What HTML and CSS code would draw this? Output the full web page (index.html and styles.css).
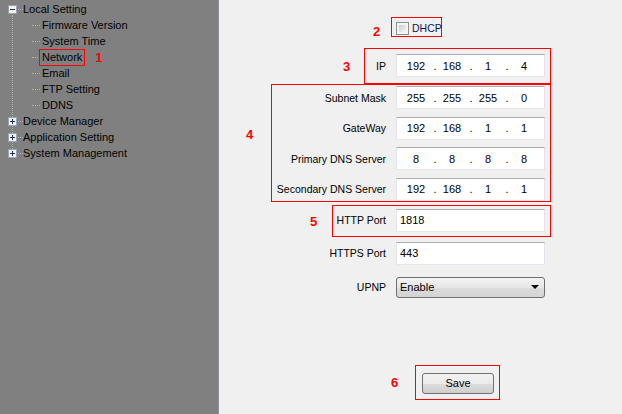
FILE: index.html
```html
<!DOCTYPE html>
<html>
<head>
<meta charset="utf-8">
<link rel="stylesheet" href="styles.css">
</head>
<body>
<div class="page">
  <aside class="sidebar">
    <ul class="tree">
      <li class="node"><span class="exp"><svg width="9" height="9" viewBox="0 0 9 9"><rect x="0.5" y="0.5" width="8" height="8" fill="#f3f3f3" stroke="#9aa3ad"/><path d="M2 4.5h5" stroke="#1c2f6b"/></svg></span><span class="stub"></span><span class="label">Local Setting</span></li>
      <li class="leaf"><span class="hline"></span><span class="label">Firmware Version</span></li>
      <li class="leaf"><span class="hline"></span><span class="label">System Time</span></li>
      <li class="leaf"><span class="hline"></span><span class="label sel">Network</span><span class="tag">1</span></li>
      <li class="leaf"><span class="hline"></span><span class="label">Email</span></li>
      <li class="leaf"><span class="hline"></span><span class="label">FTP Setting</span></li>
      <li class="leaf"><span class="hline"></span><span class="label">DDNS</span></li>
      <li class="node"><span class="exp"><svg width="9" height="9" viewBox="0 0 9 9"><rect x="0.5" y="0.5" width="8" height="8" fill="#f3f3f3" stroke="#9aa3ad"/><path d="M2 4.5h5M4.5 2v5" stroke="#1c2f6b"/></svg></span><span class="stub"></span><span class="label">Device Manager</span></li>
      <li class="node"><span class="exp"><svg width="9" height="9" viewBox="0 0 9 9"><rect x="0.5" y="0.5" width="8" height="8" fill="#f3f3f3" stroke="#9aa3ad"/><path d="M2 4.5h5M4.5 2v5" stroke="#1c2f6b"/></svg></span><span class="stub"></span><span class="label">Application Setting</span></li>
      <li class="node"><span class="exp"><svg width="9" height="9" viewBox="0 0 9 9"><rect x="0.5" y="0.5" width="8" height="8" fill="#f3f3f3" stroke="#9aa3ad"/><path d="M2 4.5h5M4.5 2v5" stroke="#1c2f6b"/></svg></span><span class="stub"></span><span class="label">System Management</span></li>
    </ul>
  </aside>
  <main class="content">
    <div class="form">
      <div class="dhcp-box"><span class="num num-2">2</span><span class="check"></span><span class="dhcp-text">DHCP</span></div>

      <div class="box box-ip">
        <span class="num num-3">3</span>
        <div class="row"><span class="lbl">IP</span><div class="field ip"><span class="oct">192</span><span class="dot">.</span><span class="oct">168</span><span class="dot">.</span><span class="oct">1</span><span class="dot">.</span><span class="oct">4</span></div></div>
      </div>

      <div class="box box-dns">
        <span class="num num-4">4</span>
        <div class="row"><span class="lbl">Subnet Mask</span><div class="field ip"><span class="oct">255</span><span class="dot">.</span><span class="oct">255</span><span class="dot">.</span><span class="oct">255</span><span class="dot">.</span><span class="oct">0</span></div></div>
        <div class="row"><span class="lbl">GateWay</span><div class="field ip"><span class="oct">192</span><span class="dot">.</span><span class="oct">168</span><span class="dot">.</span><span class="oct">1</span><span class="dot">.</span><span class="oct">1</span></div></div>
        <div class="row"><span class="lbl">Primary DNS Server</span><div class="field ip"><span class="oct">8</span><span class="dot">.</span><span class="oct">8</span><span class="dot">.</span><span class="oct">8</span><span class="dot">.</span><span class="oct">8</span></div></div>
        <div class="row"><span class="lbl">Secondary DNS Server</span><div class="field ip"><span class="oct">192</span><span class="dot">.</span><span class="oct">168</span><span class="dot">.</span><span class="oct">1</span><span class="dot">.</span><span class="oct">1</span></div></div>
      </div>

      <div class="box box-http">
        <span class="num num-5">5</span>
        <div class="row"><span class="lbl">HTTP Port</span><div class="field text">1818</div></div>
      </div>

      <div class="row free row-https"><span class="lbl">HTTPS Port</span><div class="field text">443</div></div>

      <div class="row free row-upnp"><span class="lbl">UPNP</span><div class="select"><span>Enable</span><span class="arrow"></span></div></div>

      <div class="save-box"><span class="num num-6">6</span><button class="btn">Save</button></div>
    </div>
  </main>
</div>
</body>
</html>
```
FILE: styles.css
```css
html, body {
  margin: 0;
  padding: 0;
  width: 622px;
  height: 414px;
  overflow: hidden;
  font-family: "Liberation Sans", Arial, sans-serif;
}

.page {
  display: flex;
  width: 622px;
  height: 414px;
}

.sidebar {
  width: 218px;
  flex: none;
  background: #808080;
  border-right: 1px solid #8d949e;
}

.tree {
  list-style: none;
  margin: 0;
  padding: 1px 0 0 0;
  position: relative;
  font-size: 11px;
  color: #000;
}

.tree::before {
  content: "";
  position: absolute;
  left: 12px;
  top: 15px;
  height: 134px;
  border-left: 1px dotted #b0b0b0;
}

.tree li {
  height: 16px;
  display: flex;
  align-items: center;
  white-space: nowrap;
}

.node {
  padding-left: 8px;
}

.exp {
  width: 9px;
  height: 9px;
  display: block;
  position: relative;
  z-index: 1;
}

.exp svg {
  display: block;
}

.stub {
  width: 5px;
  margin-left: 1px;
  border-top: 1px dotted #b0b0b0;
}

.leaf {
  padding-left: 32px;
}

.hline {
  width: 8px;
  border-top: 1px dotted #b0b0b0;
  margin-right: 2px;
}

.label {
  line-height: 16px;
}

.sel {
  display: inline-block;
  line-height: 15px;
  height: 15px;
  padding: 0 2px;
  margin-left: -2px;
  outline: 1px solid #ff0000;
}

.tag {
  margin-left: 11px;
  color: #ff0000;
  font-weight: bold;
  font-size: 13px;
  line-height: 16px;
  position: relative;
  top: 1px;
}

.content {
  flex: 1;
  background: #f0f0f0;
}

.form {
  margin-left: 52px;
  width: 280px;
  display: flex;
  flex-direction: column;
  font-size: 10.5px;
  color: #000;
}

.num {
  position: absolute;
  top: 50%;
  transform: translateY(-50%);
  color: #ff0000;
  font-weight: bold;
  font-size: 13px;
  line-height: 13px;
  font-family: "Liberation Sans", Arial, sans-serif;
}

.dhcp-box {
  position: relative;
  align-self: flex-start;
  margin-top: 17px;
  margin-left: 120px;
  width: 51px;
  height: 20px;
  box-sizing: border-box;
  border: 1px solid #ff0000;
  display: flex;
  align-items: center;
  padding-left: 4px;
  padding-top: 2px;
}

.num-2 { left: -19px; top: 13px; }

.check {
  width: 7px;
  height: 7px;
  padding: 2px;
  border: 1px solid #8e8f8f;
  background: linear-gradient(135deg, #cdcdcd, #f7f7f7) content-box, #f4f4f4;
  flex: none;
}

.dhcp-text {
  margin-left: 3px;
  font-size: 10.5px;
  color: #141450;
}

.box {
  position: relative;
  border: 1px solid #ff0000;
  display: flex;
  flex-direction: column;
}

.box-ip {
  align-self: flex-end;
  width: 187px;
  box-sizing: border-box;
  margin-top: 11px;
  padding: 5px 0 6px 0;
}

.num-3 { left: -22px; }

.box-dns {
  padding: 1px 0 0 0;
  gap: 7.67px;
}

.num-4 { left: -26px; top: 49px; }

.box-http {
  align-self: flex-end;
  width: 219px;
  box-sizing: border-box;
  margin-top: 3px;
  padding: 3px 0 4px 0;
}

.num-5 { left: -23px; }

.row {
  display: flex;
  justify-content: flex-end;
  align-items: center;
  gap: 10px;
  padding-right: 5px;
}

.row.free {
  padding-right: 6px;
}

.row-https {
  margin-top: 5px;
}

.row-upnp {
  margin-top: 12px;
}

.lbl {
  white-space: nowrap;
  color: #000;
}

.field {
  width: 149px;
  height: 23px;
  box-sizing: border-box;
  background: #fff;
  border: 1px solid;
  border-color: #abadb3 #e2e3ea #e3e9ef #e2e3ea;
  display: flex;
  align-items: center;
  font-size: 11px;
  flex: none;
}

.ip {
  padding-left: 6px;
}

.oct {
  width: 26px;
  text-align: center;
}

.dot {
  width: 10px;
  text-align: center;
  padding-left: 2px;
  box-sizing: border-box;
}

.text {
  padding-left: 3px;
}

.select {
  width: 149px;
  height: 21px;
  box-sizing: border-box;
  border: 1px solid #707070;
  border-radius: 3px;
  background: linear-gradient(#f4f4f4, #e6e6e6 50%, #dcdcdc 51%, #d4d4d4);
  display: flex;
  align-items: center;
  justify-content: space-between;
  padding: 0 5px 0 3px;
  font-size: 11px;
  flex: none;
}

.arrow {
  width: 0;
  height: 0;
  border-left: 4px solid transparent;
  border-right: 4px solid transparent;
  border-top: 4px solid #000;
}

.save-box {
  position: relative;
  align-self: flex-start;
  margin-left: 144px;
  margin-top: 67px;
  width: 85px;
  height: 35px;
  box-sizing: border-box;
  border: 1px solid #ff0000;
  padding: 7px 0 0 6px;
}

.num-6 { left: -25px; }

.btn {
  display: block;
  width: 72px;
  height: 21px;
  margin: 0;
  padding: 0;
  border: 1px solid #707070;
  border-radius: 3px;
  background: linear-gradient(#f2f2f2, #ebebeb 50%, #dddddd 51%, #cfcfcf);
  font-family: "Liberation Sans", Arial, sans-serif;
  font-size: 11px;
  color: #000;
}
```
